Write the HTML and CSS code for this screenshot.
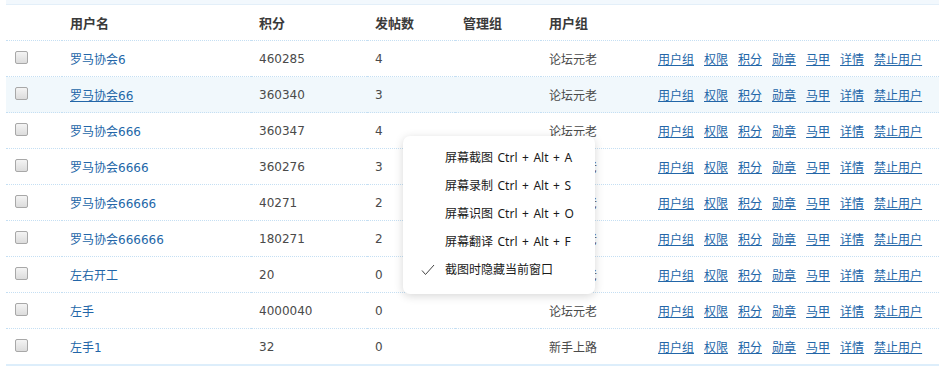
FILE: index.html
```html
<!DOCTYPE html>
<html lang="zh-cn">

<head>
  <meta charset="UTF-8">
  <meta name="viewport" content="width=device-width, initial-scale=1">
  <title>用户管理</title>
  <link rel="stylesheet" href="styles.css">
</head>

<body>
  <div class="topband"></div>
  <table class="users">
    <colgroup>
      <col class="c-chk">
      <col class="c-name">
      <col class="c-score">
      <col class="c-posts">
      <col class="c-admin">
      <col class="c-group">
      <col class="c-ops">
    </colgroup>
    <thead>
      <tr>
        <th></th>
        <th>用户名</th>
        <th>积分</th>
        <th>发帖数</th>
        <th>管理组</th>
        <th>用户组</th>
        <th></th>
      </tr>
    </thead>
    <tbody>
      <tr>
        <td><input type="checkbox" class="chk"></td>
        <td><a href="#" class="uname">罗马协会6</a></td>
        <td>460285</td>
        <td>4</td>
        <td></td>
        <td>论坛元老</td>
        <td class="ops"><a href="#">用户组</a><a href="#">权限</a><a href="#">积分</a><a href="#">勋章</a><a href="#">马甲</a><a href="#">详情</a><a href="#">禁止用户</a></td>
      </tr>
      <tr class="hover">
        <td><input type="checkbox" class="chk"></td>
        <td><a href="#" class="uname">罗马协会66</a></td>
        <td>360340</td>
        <td>3</td>
        <td></td>
        <td>论坛元老</td>
        <td class="ops"><a href="#">用户组</a><a href="#">权限</a><a href="#">积分</a><a href="#">勋章</a><a href="#">马甲</a><a href="#">详情</a><a href="#">禁止用户</a></td>
      </tr>
      <tr>
        <td><input type="checkbox" class="chk"></td>
        <td><a href="#" class="uname">罗马协会666</a></td>
        <td>360347</td>
        <td>4</td>
        <td></td>
        <td>论坛元老</td>
        <td class="ops"><a href="#">用户组</a><a href="#">权限</a><a href="#">积分</a><a href="#">勋章</a><a href="#">马甲</a><a href="#">详情</a><a href="#">禁止用户</a></td>
      </tr>
      <tr>
        <td><input type="checkbox" class="chk"></td>
        <td><a href="#" class="uname">罗马协会6666</a></td>
        <td>360276</td>
        <td>3</td>
        <td></td>
        <td>论坛元老</td>
        <td class="ops"><a href="#">用户组</a><a href="#">权限</a><a href="#">积分</a><a href="#">勋章</a><a href="#">马甲</a><a href="#">详情</a><a href="#">禁止用户</a></td>
      </tr>
      <tr>
        <td><input type="checkbox" class="chk"></td>
        <td><a href="#" class="uname">罗马协会66666</a></td>
        <td>40271</td>
        <td>2</td>
        <td></td>
        <td>论坛元老</td>
        <td class="ops"><a href="#">用户组</a><a href="#">权限</a><a href="#">积分</a><a href="#">勋章</a><a href="#">马甲</a><a href="#">详情</a><a href="#">禁止用户</a></td>
      </tr>
      <tr>
        <td><input type="checkbox" class="chk"></td>
        <td><a href="#" class="uname">罗马协会666666</a></td>
        <td>180271</td>
        <td>2</td>
        <td></td>
        <td>论坛元老</td>
        <td class="ops"><a href="#">用户组</a><a href="#">权限</a><a href="#">积分</a><a href="#">勋章</a><a href="#">马甲</a><a href="#">详情</a><a href="#">禁止用户</a></td>
      </tr>
      <tr>
        <td><input type="checkbox" class="chk"></td>
        <td><a href="#" class="uname">左右开工</a></td>
        <td>20</td>
        <td>0</td>
        <td></td>
        <td>论坛元老</td>
        <td class="ops"><a href="#">用户组</a><a href="#">权限</a><a href="#">积分</a><a href="#">勋章</a><a href="#">马甲</a><a href="#">详情</a><a href="#">禁止用户</a></td>
      </tr>
      <tr>
        <td><input type="checkbox" class="chk"></td>
        <td><a href="#" class="uname">左手</a></td>
        <td>4000040</td>
        <td>0</td>
        <td></td>
        <td>论坛元老</td>
        <td class="ops"><a href="#">用户组</a><a href="#">权限</a><a href="#">积分</a><a href="#">勋章</a><a href="#">马甲</a><a href="#">详情</a><a href="#">禁止用户</a></td>
      </tr>
      <tr class="last">
        <td><input type="checkbox" class="chk"></td>
        <td><a href="#" class="uname">左手1</a></td>
        <td>32</td>
        <td>0</td>
        <td></td>
        <td>新手上路</td>
        <td class="ops"><a href="#">用户组</a><a href="#">权限</a><a href="#">积分</a><a href="#">勋章</a><a href="#">马甲</a><a href="#">详情</a><a href="#">禁止用户</a></td>
      </tr>
    </tbody>
  </table>

  <!-- 截图工具的右键菜单 -->
  <div class="ctxmenu">
    <div class="item">屏幕截图 Ctrl + Alt + A</div>
    <div class="item">屏幕录制 Ctrl + Alt + S</div>
    <div class="item">屏幕识图 Ctrl + Alt + O</div>
    <div class="item">屏幕翻译 Ctrl + Alt + F</div>
    <div class="item checked">
      <svg class="tick" width="14" height="12" viewBox="0 0 14 12"><polyline points="1,6.5 4.5,10.5 13,1" fill="none" stroke="#444" stroke-width="1"/></svg>
      截图时隐藏当前窗口
    </div>
  </div>
</body>

</html>
```

FILE: styles.css
```css
body {
  margin: 0px;
  background-color: #FFFFFF;
  font-family: "DejaVu Sans", "Noto Sans CJK SC", sans-serif;
  font-size: 12px;
  color: #4a4a4a;
  overflow: hidden;
}

.topband {
  margin-left: 6px;
  height: 4px;
  background-color: #F2F8FD;
  border-bottom: 1px solid #E3EFF9;
}

.users {
  margin-left: 6px;
  width: 933px;
  border-collapse: collapse;
  table-layout: fixed;
}

.c-chk { width: 56px; }
.c-name { width: 189px; }
.c-score { width: 116px; }
.c-posts { width: 88px; }
.c-admin { width: 86px; }
.c-group { width: 109px; }

.users th {
  height: 35px;
  padding: 0 8px;
  text-align: left;
  font-size: 13px;
  font-weight: bold;
  color: #3a3a3a;
  border-bottom: 1px dotted #C5DFF3;
}

.users td {
  height: 35px;
  padding: 0 8px;
  white-space: nowrap;
  border-bottom: 1px dotted #C5DFF3;
}

.users tr.hover td {
  background-color: #F1F8FC;
}

.users tr.last td {
  border-bottom: 2px solid #DDEEFB;
}

.chk {
  appearance: none;
  -webkit-appearance: none;
  display: block;
  margin: 0 0 0 1px;
  width: 13px;
  height: 13px;
  border: 1px solid #A8A8A8;
  border-radius: 2px;
  background: linear-gradient(#F4F4F4, #DCDCDC);
  position: relative;
  top: -1px;
}

a {
  color: #2366A8;
}

.uname {
  text-decoration: none;
}

.hover .uname {
  text-decoration: underline;
}

.ops a {
  margin-right: 10px;
  text-decoration: underline;
}

.ctxmenu {
  position: absolute;
  left: 403px;
  top: 136px;
  width: 192px;
  padding: 8px 0 10px 0;
  background-color: #FFFFFF;
  border-radius: 7px;
  box-shadow: 0px 2px 10px rgba(0, 0, 0, 0.16);
  font-family: "Noto Sans", "Noto Sans CJK SC", sans-serif;
  font-size: 12px;
  word-spacing: 1.4px;
  color: #1A1A1A;
}

.ctxmenu .item {
  height: 28px;
  line-height: 28px;
  padding-left: 42px;
  position: relative;
}

.tick {
  position: absolute;
  left: 18px;
  top: 8px;
}
```
